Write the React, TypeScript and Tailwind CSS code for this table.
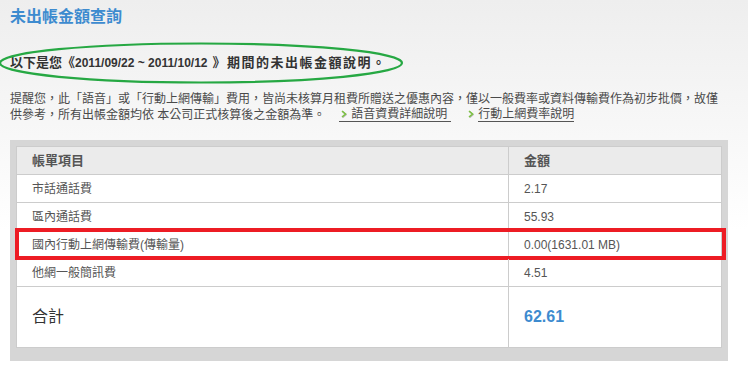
import React from "react";

const Arrow = () => (
  <svg width="6" height="8" viewBox="0 0 6 8" className="inline-block mr-[4px] mb-[1px]">
    <path d="M1 1 L4.5 4 L1 7" fill="none" stroke="#b5b5b5" strokeWidth="1.4" transform="translate(0.6,0.6)" />
    <path d="M1 1 L4.5 4 L1 7" fill="none" stroke="#7cc242" strokeWidth="1.6" />
  </svg>
);

export default function App() {
  const rows = [
    { k: "市話通話費", v: "2.17" },
    { k: "區內通話費", v: "55.93" },
    { k: "國內行動上網傳輸費(傳輸量)", v: "0.00(1631.01 MB)", hl: true },
    { k: "他網一般簡訊費", v: "4.51" },
  ];
  return (
    <div
      className="w-[748px] h-[384px] overflow-hidden bg-linear-to-b from-[#eeeeee] to-white to-[60%] text-[#555555]"
      style={{ fontFamily: '"Liberation Sans", "Noto Sans CJK TC", sans-serif' }}
    >
      <h1 className="pl-[10px] pt-[8px] h-[26px] text-[16px] leading-[18px] font-bold text-[#3d8bcf]">
        未出帳金額查詢
      </h1>

      <div className="relative mt-[17px] h-[40px] pl-[10px] flex items-center font-bold text-[#333333]">
        <svg
          width="406"
          height="44"
          viewBox="0 0 406 44"
          className="absolute left-[-1px] top-[-2px] pointer-events-none"
        >
          <ellipse cx="202" cy="22" rx="201" ry="19.5" fill="none" stroke="#26a843" strokeWidth="2.2" />
        </svg>
        <span className="text-[13px] leading-[16px]">以下是您《</span>
        <span className="text-[12px] leading-[16px]">2011/09/22 ~ 2011/10/12 </span>
        <span className="text-[13px] leading-[16px] tracking-[1.5px]">&nbsp;》期間的未出帳金額說明。</span>
      </div>

      <div className="mt-[8px] pl-[10px] text-[12px] leading-[16px] text-[#4a4a4a]">
        <div className="h-[16px] whitespace-nowrap">
          提醒您，此「語音」或「行動上網傳輸」費用，皆尚未核算月租費所贈送之優惠內容，僅以一般費率或資料傳輸費作為初步批價，故僅
        </div>
        <div className="h-[16px] flex items-start whitespace-nowrap">
          <span>供參考，所有出帳金額均依 本公司正式核算後之金額為準。</span>
          <span className="ml-[14px] pl-[2px] pr-[4px] leading-[14px] border-b border-[#555555] flex items-center">
            <Arrow />
            語音資費詳細說明
          </span>
          <span className="ml-[17px] flex items-center leading-[14px]">
            <Arrow />
            <span className="border-b border-[#555555]">行動上網費率說明</span>
          </span>
        </div>
      </div>

      <div className="mt-[17px] ml-[10px] w-[718px] bg-[#d6d6d6] pt-[6px] px-[6px] pb-[13px]">
        <div className="border border-[#cccccc] bg-white">
          <div className="flex h-[28px] bg-[#ebebeb] border-b border-[#cccccc] text-[13px] font-bold text-[#555555]">
            <div className="w-[492px] border-r border-[#cccccc] pl-[15px] flex items-center">帳單項目</div>
            <div className="flex-1 pl-[15px] flex items-center">金額</div>
          </div>
          {rows.map((r) => (
            <div key={r.k} className="relative flex h-[28px] border-b border-[#cccccc] text-[12px]">
              <div className="w-[492px] border-r border-[#cccccc] pl-[15px] flex items-center">{r.k}</div>
              <div className="flex-1 pl-[15px] flex items-center">{r.v}</div>
              {r.hl && (
                <div className="absolute -left-[2px] -right-[5px] -top-[3px] -bottom-[2px] border-[4px] border-[#ed1c24] pointer-events-none" />
              )}
            </div>
          ))}
          <div className="flex h-[60px]">
            <div className="w-[492px] border-r border-[#cccccc] pl-[15px] flex items-center text-[16px] text-[#333333]">
              合計
            </div>
            <div className="flex-1 pl-[15px] flex items-center text-[16px] font-bold text-[#3d8bcf]">62.61</div>
          </div>
        </div>
      </div>
    </div>
  );
}
